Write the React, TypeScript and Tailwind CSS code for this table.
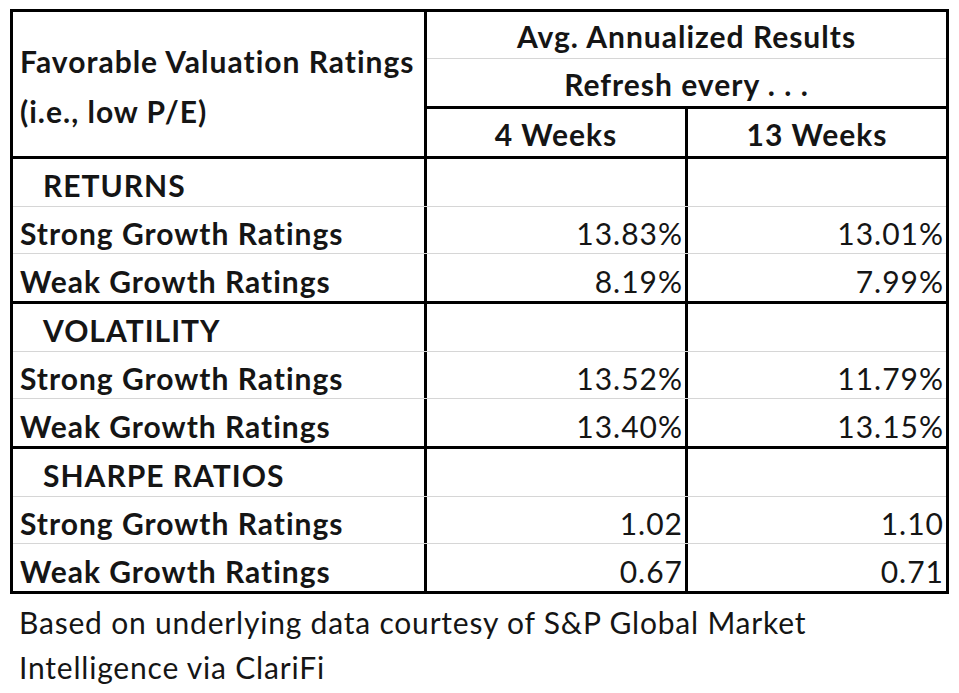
import React from 'react';

type Row = { label: string; a: string; b: string };
type Block = { title: string; rows: Row[] };

const blocks: Block[] = [
  {
    title: 'RETURNS',
    rows: [
      { label: 'Strong Growth Ratings', a: '13.83%', b: '13.01%' },
      { label: 'Weak Growth Ratings', a: '8.19%', b: '7.99%' },
    ],
  },
  {
    title: 'VOLATILITY',
    rows: [
      { label: 'Strong Growth Ratings', a: '13.52%', b: '11.79%' },
      { label: 'Weak Growth Ratings', a: '13.40%', b: '13.15%' },
    ],
  },
  {
    title: 'SHARPE RATIOS',
    rows: [
      { label: 'Strong Growth Ratings', a: '1.02', b: '1.10' },
      { label: 'Weak Growth Ratings', a: '0.67', b: '0.71' },
    ],
  },
];

const font = { fontFamily: 'Lato, "Open Sans", sans-serif' };

const DataRow: React.FC<{ row: Row; last?: boolean; h: string }> = ({ row, last, h }) => (
  <div className={`flex ${h} ${last ? '' : 'border-b border-[#d6d6d6]'}`}>
    <div className="w-[411px] flex items-end pl-[7px] pb-[5px] font-bold">{row.label}</div>
    <div className="w-[3px] bg-black" />
    <div className="w-[258px] flex items-end justify-end pr-[2px] pb-[5px]">{row.a}</div>
    <div className="w-[3px] bg-black" />
    <div className="w-[258px] flex items-end justify-end pr-[2px] pb-[5px]">{row.b}</div>
  </div>
);

export default function App() {
  return (
    <div
      className="w-[959px] h-[693px] bg-white text-[#151515] text-[30px] tracking-[1px] leading-none"
      style={font}
    >
      <div className="pt-[9px] pl-[10px]">
        <div className="w-[939px] border-[3px] border-black">
          {/* header */}
          <div className="flex h-[144px]">
            <div className="w-[411px] flex flex-col justify-center pl-[7px] pt-[4px] font-bold leading-[50px]">
              <div>Favorable Valuation Ratings</div>
              <div>(i.e., low P/E)</div>
            </div>
            <div className="w-[3px] bg-black" />
            <div className="flex-1 flex flex-col font-bold">
              <div className="h-[47px] flex items-end justify-center pb-[7px] border-b border-[#d6d6d6]">
                Avg. Annualized Results
              </div>
              <div className="h-[47px] flex items-end justify-center pb-[7px]">Refresh every . . .</div>
              <div className="h-[3px] bg-black" />
              <div className="flex h-[47px]">
                <div className="w-[258px] flex items-end justify-center pb-[7px]">4 Weeks</div>
                <div className="w-[3px] bg-black" />
                <div className="w-[258px] flex items-end justify-center pb-[7px]">13 Weeks</div>
              </div>
            </div>
          </div>

          {blocks.map((block) => (
            <div key={block.title} className="border-t-[3px] border-black">
              <div className="flex h-[48px] border-b border-[#d6d6d6]">
                <div className="w-[411px] flex items-end pl-[30px] pb-[6px] font-bold">{block.title}</div>
                <div className="w-[3px] bg-black" />
                <div className="w-[258px]" />
                <div className="w-[3px] bg-black" />
                <div className="w-[258px]" />
              </div>
              <DataRow row={block.rows[0]} h="h-[47px]" />
              <DataRow row={block.rows[1]} h="h-[47px]" last />
            </div>
          ))}
        </div>

        <div className="pl-[9px] pt-[6px] leading-[45px] tracking-[0.8px]">
          <div>Based on underlying data courtesy of S&amp;P Global Market</div>
          <div>Intelligence via ClariFi</div>
        </div>
      </div>
    </div>
  );
}
